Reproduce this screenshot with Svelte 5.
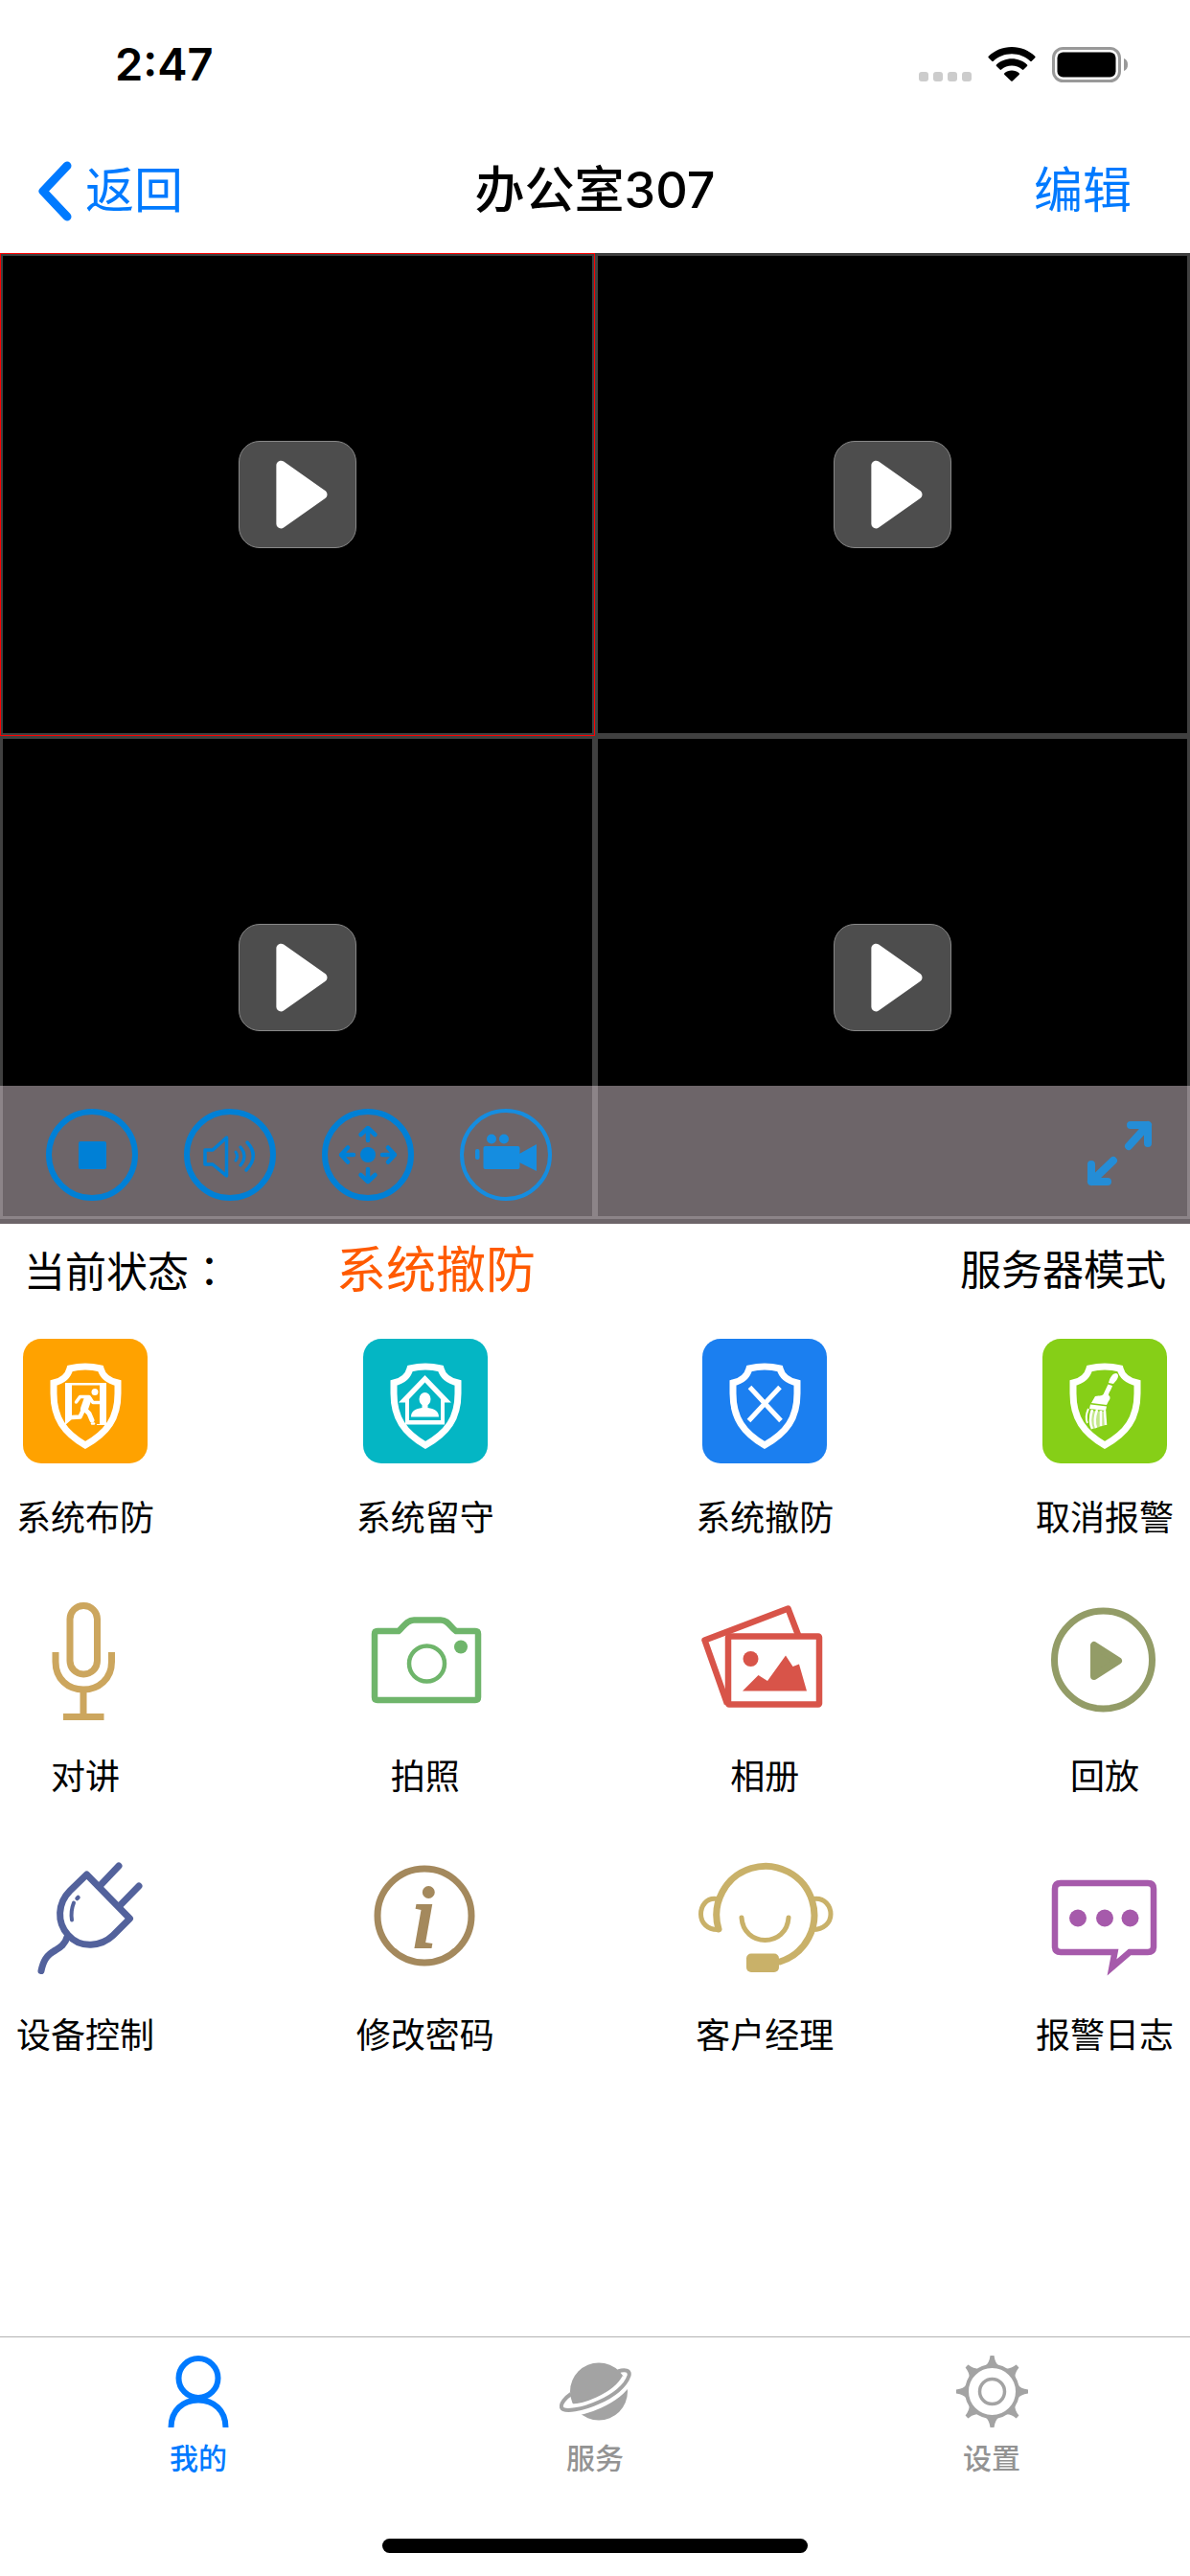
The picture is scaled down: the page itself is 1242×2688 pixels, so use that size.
<script>
    // 四路视频画面
    const cameras = [1, 2, 3, 4];

    // 功能菜单
    const actions = [
        { id: 'arm', label: '系统布防', color: '#ffa200' },
        { id: 'stay', label: '系统留守', color: '#04b6c4' },
        { id: 'disarm', label: '系统撤防', color: '#1b7ff0' },
        { id: 'cancel', label: '取消报警', color: '#86cf17' },
        { id: 'talk', label: '对讲', color: '#cca65e' },
        { id: 'photo', label: '拍照', color: '#6fb56b' },
        { id: 'album', label: '相册', color: '#d85449' },
        { id: 'playback', label: '回放', color: '#939c67' },
        { id: 'device', label: '设备控制', color: '#53629c' },
        { id: 'password', label: '修改密码', color: '#a4895d' },
        { id: 'manager', label: '客户经理', color: '#c9b169' },
        { id: 'log', label: '报警日志', color: '#a65aab' },
    ];

    const tabs = [
        { id: 'mine', label: '我的' },
        { id: 'service', label: '服务' },
        { id: 'settings', label: '设置' },
    ];

    const teeth = [0, 45, 90, 135, 180, 225, 270, 315];

    let selectedCamera = $state(1);
    let activeTab = $state('mine');
    let status = $state('系统撤防');

    // 布防、留守、撤防会改变当前状态
    function runAction(action) {
        if (['arm', 'stay', 'disarm'].includes(action.id)) {
            status = action.label;
        }
    }
</script>

{#snippet shield()}
    <path
        d="M56 38 Q72 34 88 38 C90 46 97 51 106 53 V64 C106 90 95 105 72 118 C50 105 39 90 39 64 V53 C48 51 54 46 56 38 Z"
        fill="none" stroke="#fff" stroke-width="7"
    />
{/snippet}

<div class="page">
    <div class="status-bar">
        <span class="time">2:47</span>
        <div class="indicators">
            <svg class="dots" viewBox="0 0 55 36" aria-hidden="true">
                <g fill="#ccc">
                    <rect x="0" y="26" width="10" height="10" rx="3" />
                    <rect x="15" y="26" width="10" height="10" rx="3" />
                    <rect x="30" y="26" width="10" height="10" rx="3" />
                    <rect x="45" y="26" width="10" height="10" rx="3" />
                </g>
            </svg>
            <svg class="wifi" viewBox="0 0 50 36" aria-hidden="true">
                <path d="M25 0 C34.500 0 43 3.700 49.300 9.700 Q50 10.500 49.300 11.300 L45.800 14.800 Q45 15.500 44.200 14.800 C39 10 32.300 7.300 25 7.300 S11 10 5.800 14.800 Q5 15.500 4.200 14.800 L.7 11.300 Q0 10.500 .7 9.700 C7 3.700 15.500 0 25 0Z" />
                <path d="M25 12.300 C31.200 12.300 36.800 14.600 41 18.500 Q41.800 19.300 41 20.100 L37.400 23.600 Q36.600 24.300 35.800 23.600 C32.900 21 29.100 19.500 25 19.500 S17.100 21 14.200 23.600 Q13.400 24.300 12.600 23.600 L9 20.100 Q8.200 19.300 9 18.500 C13.200 14.600 18.800 12.300 25 12.300Z" />
                <path d="M25 24.500 C27.900 24.500 30.500 25.500 32.600 27.200 Q33.400 28 32.600 28.900 L25.800 35.500 Q25 36.200 24.200 35.500 L17.400 28.900 Q16.600 28 17.400 27.200 C19.500 25.500 22.100 24.500 25 24.500Z" />
            </svg>
            <svg class="battery" viewBox="0 0 80 37" aria-hidden="true">
                <rect x="1.500" y="1.500" width="69" height="34" rx="10" fill="none" stroke="#999" stroke-width="3" />
                <rect x="5.500" y="5.500" width="61" height="26" rx="6" />
                <path d="M75 12 C78 13 79 15.500 79 18.500 S78 24 75 25Z" fill="#999" />
            </svg>
        </div>
    </div>

    <header class="nav">
        <button class="nav-button back">
            <svg viewBox="0 0 36 63" aria-hidden="true">
                <path d="M31 5 L6 31.500 L31 58" fill="none" stroke="currentColor" stroke-width="9" stroke-linecap="round" stroke-linejoin="round" />
            </svg>
            返回
        </button>
        <h1>办公室307</h1>
        <button class="nav-button edit">编辑</button>
    </header>

    <section class="video">
        <div class="cells">
            {#each cameras as camera}
                <div class="cell" class:selected={camera === selectedCamera}>
                    <button class="play" aria-label="播放画面{camera}" onclick={() => (selectedCamera = camera)}>
                        <svg viewBox="0 0 123 112" aria-hidden="true">
                            <path d="M44 25 V87 L88 56 Z" fill="#fff" stroke="#fff" stroke-width="10" stroke-linejoin="round" />
                        </svg>
                    </button>
                </div>
            {/each}
        </div>

        <div class="toolbar">
            <button aria-label="停止">
                <svg viewBox="0 0 96 96" aria-hidden="true">
                    <circle cx="48" cy="48" r="45" fill="none" stroke="#0080d6" stroke-width="6" />
                    <rect x="34" y="34" width="29" height="29" rx="2" fill="#0080d6" />
                </svg>
            </button>
            <button aria-label="声音">
                <svg viewBox="0 0 96 96" aria-hidden="true">
                    <g fill="none" stroke="#0080d6">
                        <circle cx="48" cy="48" r="45" stroke-width="6" />
                        <path d="M22 43 H30 L44.500 30 V70 L30 58 H22 Z" stroke-width="3.500" stroke-linejoin="round" />
                        <path d="M54 45 Q57 49.500 54 54" stroke-width="3" stroke-linecap="round" />
                        <path d="M59 40 Q67 49.500 59 59" stroke-width="3.200" stroke-linecap="round" />
                        <path d="M66 35 Q79 49.500 65 64" stroke-width="3.500" stroke-linecap="round" />
                    </g>
                </svg>
            </button>
            <button aria-label="云台">
                <svg viewBox="0 0 96 96" aria-hidden="true">
                    <circle cx="48" cy="48" r="45" fill="none" stroke="#0080d6" stroke-width="6" />
                    <circle cx="48" cy="48" r="8" fill="#0080d6" />
                    <g fill="none" stroke="#0080d6" stroke-width="4.500" stroke-linecap="round" stroke-linejoin="round">
                        {#each [0, 90, 180, 270] as angle}
                            <path d="M48 33 V20 M40.500 27 L48 20 L55.500 27" transform="rotate({angle} 48 48)" />
                        {/each}
                    </g>
                </svg>
            </button>
            <button aria-label="录像">
                <svg viewBox="0 0 96 96" aria-hidden="true">
                    <circle cx="48" cy="48" r="46" fill="none" stroke="#158de0" stroke-width="4" />
                    <g fill="#158de0">
                        <circle cx="33" cy="31.500" r="5" />
                        <circle cx="46" cy="31.500" r="5" />
                        <rect x="24.500" y="39" width="38" height="24" rx="2" />
                        <path d="M62 51 V47 L80 37 V65 L62 56 Z" />
                        <rect x="16" y="42" width="4.500" height="11" rx="2" />
                    </g>
                </svg>
            </button>
            <button class="expand" aria-label="全屏">
                <svg viewBox="0 0 96 96" aria-hidden="true">
                    <g fill="none" stroke="#248dd6" stroke-width="8" stroke-linecap="round" stroke-linejoin="round">
                        <path d="M56 39 L76 17 M58 17 H76 V36" />
                        <path d="M40 54 L17 76 M17 58 V76 H34" />
                    </g>
                </svg>
            </button>
        </div>
    </section>

    <section class="state">
        <span class="state-label">当前状态<span class="colon">：</span></span>
        <strong>{status}</strong>
        <span>服务器模式</span>
    </section>

    <main class="actions">
        {#each actions as action}
            <button class="action" onclick={() => runAction(action)}>
                <svg viewBox="0 0 144 144" color={action.color} aria-hidden="true">
                    {#if action.id === 'arm'}
                        <rect x="7" y="7" width="130" height="130" rx="19" fill="currentColor" />
                        {@render shield()}
                        <path d="M51 53 H94 V97 H84 V96 H87 V55.500 H58 V91 L51 97 Z" fill="#fff" />
                        <circle cx="82" cy="62.500" r="3.500" fill="#fff" />
                        <g fill="none" stroke="#fff" stroke-linecap="round" stroke-linejoin="round">
                            <path d="M62.500 73 L66.500 67.500 H76 L80 73.500 H88" stroke-width="3.500" />
                            <path d="M74.500 70 L71 80" stroke-width="8" />
                            <path d="M72 81 L76 85 L79 92" stroke-width="5" />
                            <path d="M70 81 L66.500 88.500 L58 89" stroke-width="4.500" />
                            <path d="M79 95.500 H81" stroke-width="2.500" />
                        </g>
                    {:else if action.id === 'stay'}
                        <rect x="7" y="7" width="130" height="130" rx="19" fill="currentColor" />
                        {@render shield()}
                        <path d="M71.500 45 L99 73.500 H92 V96.500 H51 V73.500 H44 Z M71.500 52.500 L55 70 V92 H88 V70 Z" fill="#fff" fill-rule="evenodd" />
                        <ellipse cx="71.500" cy="70" rx="6" ry="7" fill="#fff" />
                        <path d="M68.500 74 H74.500 V79 C81 80 86 82 86 88.500 H57 C57 82 62 80 68.500 79 Z" fill="#fff" />
                    {:else if action.id === 'disarm'}
                        <rect x="7" y="7" width="130" height="130" rx="19" fill="currentColor" />
                        {@render shield()}
                        <path d="M56.500 57.500 L89 92.500 M88 57.500 L55.500 92.500" stroke="#fff" stroke-width="5" />
                    {:else if action.id === 'cancel'}
                        <rect x="7" y="7" width="130" height="130" rx="19" fill="currentColor" />
                        {@render shield()}
                        <g fill="#fff">
                            <path d="M84 43 C87 44 87 48 81 54 L76 53 C77 48 80 43 84 43 Z" />
                            <path d="M75.500 54.500 L80 56 C79 60 76 63 76 66 C78 67 78 70 76 72 L74 76 L58 74 L62 67 C67 66 70 67 71 64 Z" />
                            <path d="M57 75.500 L74 77.500 L73 82 L56 80 Z" />
                            <path d="M57 82 L72 83 L73 97 L60 101 Q54 93 57 82 Z" opacity=".5" />
                        </g>
                        <g fill="none" stroke="#fff" stroke-width="2">
                            <path d="M55 80 Q51 89 54 95" />
                            <path d="M59 81 Q55 93 59 101" stroke-width="2.500" />
                            <path d="M64 81 Q60 92 63 100" stroke-width="2.500" />
                            <path d="M68 82 L68 98" stroke-width="2.500" />
                            <path d="M72 82 L73 97" stroke-width="2.500" />
                        </g>
                    {:else if action.id === 'talk'}
                        <g fill="none" stroke="currentColor" stroke-width="7">
                            <rect x="56" y="15.500" width="28.500" height="71.500" rx="14" />
                            <path d="M41 64 V74 C41 92 54 103 70 103 S99.500 92 99.500 74 V64" />
                            <path d="M70 103 V129 M49 131.500 H91.500" />
                        </g>
                    {:else if action.id === 'photo'}
                        <path
                            d="M22 42 H44 C49 38 52 30.500 60 30.500 H88 C96 30.500 98 38 104 42 H124 Q127 42 127 45 V111 Q127 114 124 114 H22 Q19 114 19 111 V45 Q19 42 22 42 Z"
                            fill="none" stroke="currentColor" stroke-width="6.500"
                        />
                        <circle cx="73.500" cy="76" r="18.500" fill="none" stroke="currentColor" stroke-width="4.500" />
                        <circle cx="109" cy="58.500" r="7" fill="currentColor" />
                    {:else if action.id === 'album'}
                        <g fill="none" stroke="currentColor" stroke-width="6.500" stroke-linejoin="round">
                            <path d="M33 118 L9.500 51.500 L96.500 18.500 L107 46" />
                            <rect x="34" y="47.500" width="95" height="71" rx="1" />
                        </g>
                        <circle cx="57.500" cy="71" r="8" fill="currentColor" />
                        <path d="M49 104.500 L65.500 88 L75 94 L94 67.500 L101.500 79 L108 76.500 L116 104.500 Z" fill="currentColor" />
                    {:else if action.id === 'playback'}
                        <circle cx="70.500" cy="72" r="51" fill="none" stroke="currentColor" stroke-width="7" />
                        <path d="M61 57 V89 L86 73 Z" fill="currentColor" stroke="currentColor" stroke-width="8" stroke-linejoin="round" />
                    {:else if action.id === 'device'}
                        <g fill="none" stroke="currentColor" stroke-width="7" stroke-linecap="round" stroke-linejoin="round">
                            <path d="M73.500 26 L118.500 72 L101 89.500 C89 101 67 104 54 89 C42 76 43 56 56 43 Z" />
                            <path d="M88 37 L107 17 M108.500 58 L128 38" />
                            <path d="M53.500 90 C51 99 46 102 41 105 C31 110 28 117 26 126.500" />
                            <path d="M60 55.500 Q56.500 64 58 73.500" stroke-width="4" />
                            <path d="M63.500 51 L64.500 50" stroke-width="4.500" />
                        </g>
                    {:else if action.id === 'password'}
                        <circle cx="71" cy="69" r="49" fill="none" stroke="currentColor" stroke-width="7" />
                        <text x="70" y="101" fill="currentColor" stroke="currentColor" stroke-width="3">i</text>
                    {:else if action.id === 'manager'}
                        <g fill="none" stroke="currentColor" stroke-width="7" stroke-linecap="round">
                            <path d="M24 83 A51 51 0 1 1 88 117" />
                            <path d="M22 51.500 C11 50 5.500 59 5.500 67.500 S12 84 24 83.500" stroke-width="5" />
                            <path d="M123 51.500 C135 50 141 59 141 67.500 S134 84 121 83.500" stroke-width="5" />
                            <path d="M48 71 C49 86 60 94.500 72.500 94.500 S96 86 97 71" stroke-width="5" />
                        </g>
                        <rect x="53" y="108.500" width="34" height="19.500" rx="5" fill="currentColor" />
                    {:else if action.id === 'log'}
                        <path
                            d="M26 35 H117 Q123 35 123 41 V101 Q123 107 117 107 H98 L79.500 123 L82.500 107 H26 Q20 107 20 101 V41 Q20 35 26 35 Z"
                            fill="none" stroke="currentColor" stroke-width="6.500"
                        />
                        <g fill="currentColor">
                            <circle cx="44" cy="71.500" r="9" />
                            <circle cx="72" cy="71.500" r="9" />
                            <circle cx="98.500" cy="71.500" r="9" />
                        </g>
                    {/if}
                </svg>
                <span>{action.label}</span>
            </button>
        {/each}
    </main>

    <footer>
        <nav class="tabs">
            {#each tabs as tab}
                <button class="tab" class:active={tab.id === activeTab} onclick={() => (activeTab = tab.id)}>
                    <svg viewBox="0 0 75 75" aria-hidden="true">
                        {#if tab.id === 'mine'}
                            <g fill="none" stroke="currentColor" stroke-width="6">
                                <circle cx="37" cy="23.500" r="20.500" />
                                <path d="M8.500 75 C8.500 57 21 46.500 37 46.500 S65.500 57 65.500 75" />
                            </g>
                        {:else if tab.id === 'service'}
                            <circle cx="41" cy="37.500" r="30" fill="#a3a3a3" />
                            <g fill="none">
                                <path d="M71 24 C66 34 54 43 41 49 C29 54.500 16 58 6 56" stroke="#fff" stroke-width="12" />
                                <path d="M61 16.500 C68 14 74 15 72.500 21 C69 32 56 42 41 48.500 C25 56 4 60 2 54 C1 50 6 44 12 40" stroke="#a3a3a3" stroke-width="4" />
                            </g>
                        {:else}
                            <g fill="none" stroke="#a3a3a3" stroke-width="4">
                                <circle cx="37.500" cy="37.500" r="26.500" />
                                <circle cx="37.500" cy="37.500" r="13" stroke-width="3.500" />
                            </g>
                            {#each teeth as angle}
                                <path d="M30 11 Q34.500 8 35.500 0 H39.500 Q40.500 8 45 11 Z" fill="#a3a3a3" transform="rotate({angle} 37.500 37.500)" />
                            {/each}
                        {/if}
                    </svg>
                    <span>{tab.label}</span>
                </button>
            {/each}
        </nav>
        <div class="home-indicator"></div>
    </footer>
</div>

<style>
    :global(body) {
        margin: 0;
        background: #fff;
    }

    .page {
        display: flex;
        flex-direction: column;
        min-height: 100vh;
        background: #fff;
        color: #000;
        font-family: Inter, "Noto Sans CJK SC", sans-serif;
        font-size: 43px;
        line-height: 1.2;
    }

    button {
        padding: 0;
        border: 0;
        background: none;
        color: inherit;
        font: inherit;
        cursor: pointer;
    }

    svg {
        display: block;
    }

    /* 状态栏 */
    .status-bar {
        display: flex;
        align-items: center;
        justify-content: space-between;
        height: 134px;
        padding: 0 64px 0 120px;
    }

    .time {
        font-size: 47px;
        font-weight: 600;
    }

    .indicators {
        display: flex;
        align-items: center;
        gap: 17px;
    }

    .dots {
        width: 55px;
        height: 36px;
    }

    .wifi {
        width: 50px;
        height: 36px;
    }

    .battery {
        width: 80px;
        height: 37px;
    }

    /* 导航栏 */
    .nav {
        display: grid;
        grid-template-columns: 1fr auto 1fr;
        align-items: center;
        height: 130px;
        padding: 0 39px;
    }

    h1 {
        margin: 0;
        font-size: 52px;
        font-weight: 500;
    }

    .nav-button {
        color: #007aff;
        font-size: 51px;
    }

    .back {
        display: flex;
        align-items: center;
        justify-self: start;
        gap: 14px;
    }

    .back svg {
        width: 36px;
        height: 63px;
    }

    .edit {
        justify-self: end;
        padding-right: 22px;
    }

    /* 视频区域 */
    .video {
        position: relative;
        padding-bottom: 5px;
        background: #000;
    }

    .cells {
        display: grid;
        grid-template-columns: 1fr 1fr;
    }

    .cell {
        display: flex;
        align-items: center;
        justify-content: center;
        aspect-ratio: 621 / 504;
        box-shadow: inset 0 0 0 3px #404040;
    }

    .cell.selected {
        box-shadow: inset 0 0 0 1px #f00, inset 0 0 0 3px #404040;
    }

    .play {
        box-sizing: border-box;
        width: 123px;
        height: 112px;
        border: 1px solid #888;
        border-radius: 22px;
        background: #4d4d4d;
    }

    .play svg {
        width: 100%;
    }

    .toolbar {
        position: absolute;
        right: 0;
        bottom: 0;
        left: 0;
        display: flex;
        gap: 48px;
        padding: 24px 24px 24px 48px;
        background: rgba(214, 199, 206, 0.51);
    }

    .toolbar svg {
        width: 96px;
        height: 96px;
    }

    .expand {
        margin-left: auto;
    }

    /* 当前状态 */
    .state {
        display: flex;
        align-items: center;
        height: 98px;
        padding: 0 25px;
    }

    .state-label {
        width: 326px;
    }

    /* 冒号居中显示 */
    .colon {
        font-family: "Noto Sans CJK TC", sans-serif;
    }

    .state strong {
        flex: 1;
        color: #ff5a00;
        font-size: 52px;
        font-weight: 400;
    }

    /* 功能菜单 */
    .actions {
        display: grid;
        grid-template-columns: repeat(4, auto);
        justify-content: space-between;
        row-gap: 49px;
        padding: 15px 17px 48px;
    }

    .action {
        display: flex;
        flex-direction: column;
        align-items: center;
        gap: 23px;
        font-size: 36px;
        line-height: 54px;
    }

    .action svg {
        width: 144px;
        height: 144px;
    }

    .action text {
        font-family: "Liberation Serif", serif;
        font-size: 94px;
        font-style: italic;
        text-anchor: middle;
    }

    /* 底部标签栏 */
    footer {
        margin-top: auto;
        border-top: 1px solid #b2b2b2;
    }

    .tabs {
        display: grid;
        grid-template-columns: repeat(3, 1fr);
        padding-top: 19px;
    }

    .tab {
        display: flex;
        flex-direction: column;
        align-items: center;
        gap: 12px;
        color: #939393;
        font-size: 30px;
        font-weight: 500;
        line-height: 40px;
    }

    .tab.active {
        color: #007aff;
    }

    .tab svg {
        width: 75px;
        height: 75px;
    }

    .home-indicator {
        width: 444px;
        height: 15px;
        margin: 64px auto 24px;
        border-radius: 8px;
        background: #000;
    }
</style>
